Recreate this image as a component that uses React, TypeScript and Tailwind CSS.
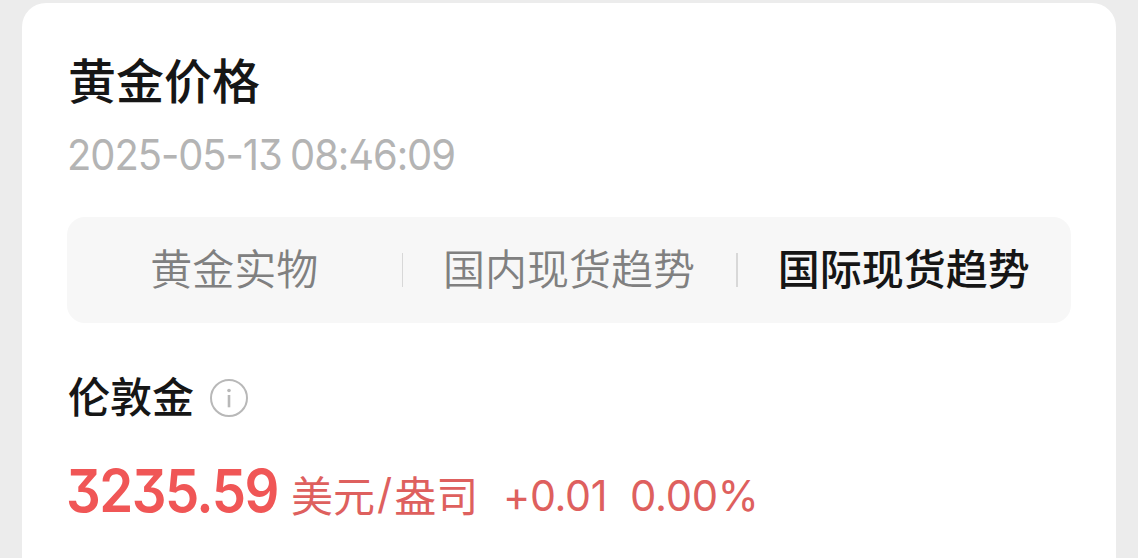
const tabs = [
  { label: '黄金实物', active: false },
  { label: '国内现货趋势', active: false },
  { label: '国际现货趋势', active: true },
];

function InfoIcon() {
  return (
    <svg width="38" height="38" viewBox="0 0 38 38" fill="none" className="mt-[5px] shrink-0">
      <circle cx="19" cy="19" r="18" stroke="#b8b8b8" strokeWidth="2" />
      <circle cx="19" cy="11.5" r="1.8" fill="#b8b8b8" />
      <path d="M19 16V28.3" stroke="#b8b8b8" strokeWidth="2.6" />
    </svg>
  );
}

export default function App() {
  return (
    <div className="h-[558px] w-full overflow-hidden bg-[#ececec] px-[22px] pt-[3px] font-['Noto_Sans_CJK_SC',sans-serif]">
      <main className="h-[580px] rounded-[24px] bg-white px-[45px] pt-[47px]">
        <h1 className="ml-px h-[56px] text-[48px] leading-[56px] font-medium text-[#161616]">黄金价格</h1>
        <p className="mt-[24px] h-[50px] w-[405px] origin-left scale-x-[0.95] font-['Inter',sans-serif] text-[42px] leading-[50px] tracking-[-1.1px] [word-spacing:-2px] whitespace-nowrap text-[#b4b4b4] [font-feature-settings:'cv09','cv02']">
          2025-05-13 08:46:09
        </p>

        <nav className="mt-[37px] flex h-[106px] w-[1004px] items-center rounded-[18px] bg-[#f7f7f7]">
          {tabs.map((tab, i) => (
            <div key={tab.label} className="relative flex-1 pb-[6px] text-center">
              {i > 0 && <span className="absolute top-[16px] left-0 h-[34px] w-[1.5px] bg-[#d8d8d8]" />}
              <button
                type="button"
                className={
                  tab.active
                    ? 'text-[42px] leading-[60px] font-medium text-[#161616]'
                    : 'text-[42px] leading-[60px] font-[350] text-[#808080]'
                }
              >
                {tab.label}
              </button>
            </div>
          ))}
        </nav>

        <div className="mt-[44px] ml-px flex h-[56px] items-center gap-[16px]">
          <h2 className="text-[42px] leading-[56px] font-medium text-[#161616]">伦敦金</h2>
          <InfoIcon />
        </div>

        <div className="mt-[33px] flex h-[70px] items-baseline whitespace-nowrap text-[#de605e]">
          <span className="w-[224px] origin-left -translate-x-px scale-x-[0.925] font-['Inter',sans-serif] text-[59px] leading-[70px] font-semibold tracking-[-1.7px] text-[#f05656] [font-feature-settings:'cv09']">
            3235.59
          </span>
          <span className="text-[42px]">
            美元<span className="mr-[2px] ml-[2px] inline-block -translate-y-[3px] font-['Inter',sans-serif] text-[42px]">/</span>盎司
          </span>
          <span className="ml-[25px] w-[102px] origin-left -translate-y-px scale-x-[0.98] font-['Inter',sans-serif] text-[42px] tracking-[-0.3px]">+0.01</span>
          <span className="ml-[25px] origin-left -translate-y-px scale-x-[0.995] font-['Inter',sans-serif] text-[42px] tracking-[-0.3px]">0.00%</span>
        </div>
      </main>
    </div>
  );
}
